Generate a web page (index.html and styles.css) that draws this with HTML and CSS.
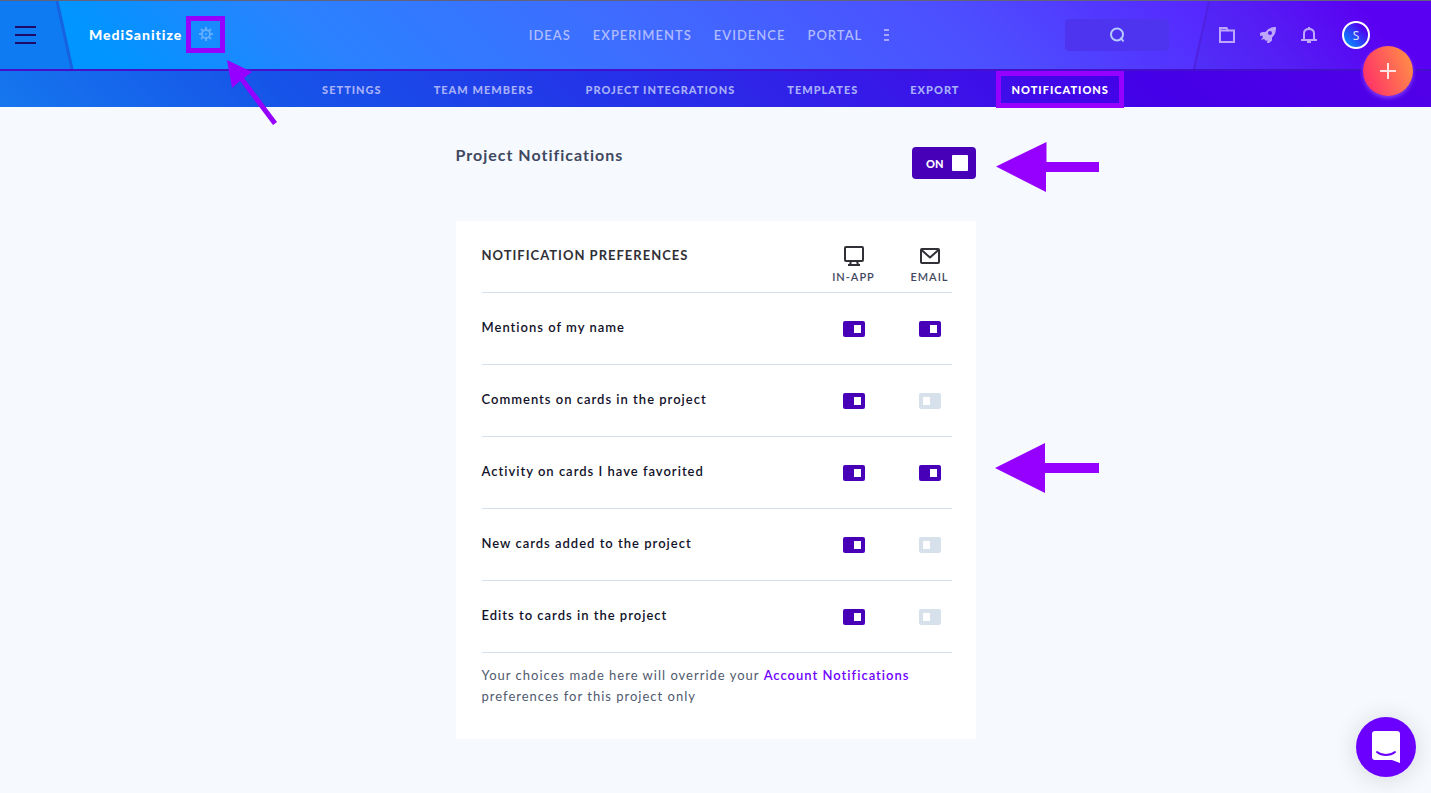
FILE: index.html
```html
<!DOCTYPE html>
<html lang="en">
<head>
<meta charset="utf-8">
<meta name="viewport" content="width=device-width, initial-scale=1">
<title>Project Notifications</title>
<link rel="stylesheet" href="styles.css">
</head>
<body>
<header class="header">
  <div class="topbar">
    <svg class="wedge wedge-left" width="76" height="68" viewBox="0 0 76 68" aria-hidden="true"><path fill="#0f7bf2" d="M0 0h56l15 68H0z"/><path stroke="#1762e0" stroke-width="3" d="M57 0l15 68"/></svg>
    <svg class="wedge wedge-right" width="240" height="68" viewBox="0 0 240 68" aria-hidden="true"><defs><linearGradient id="wedge" gradientUnits="userSpaceOnUse" x1="0" y1="68" x2="135" y2="-40"><stop offset="0" stop-color="#5030f8"/><stop offset=".5" stop-color="#551cf4"/><stop offset="1" stop-color="#5a00f2"/></linearGradient></defs><path fill="url(#wedge)" d="M18 0h222v68H3z"/><path stroke="#5021e0" stroke-width="2" d="M18 0L3 68"/></svg>

    <div class="brand">
      <button class="icon-button" aria-label="Menu"><svg width="21" height="18" viewBox="0 0 21 18"><path fill="#1c0a66" d="M0 0h21v2H0zM0 8h21v2H0zM0 16h21v2H0z"/></svg></button>
      <div class="project">
        <a class="project-name" href="#">MediSanitize</a>
        <button class="gear" aria-label="Project settings"><svg width="14" height="14" viewBox="0 0 14 14" fill="none" stroke="#62adff"><circle cx="7" cy="7" r="4" stroke-width="2"/><circle cx="7" cy="7" r="1" fill="#62adff" stroke="none"/><path stroke-width="2" d="M7 0v3M7 11v3M0 7h3M11 7h3M2 2l2 2M10 10l2 2M12 2l-2 2M4 10l-2 2"/></svg></button>
      </div>
    </div>

    <nav class="main-nav" aria-label="Main">
      <a href="#">IDEAS</a>
      <a href="#">EXPERIMENTS</a>
      <a href="#">EVIDENCE</a>
      <a href="#">PORTAL</a>
      <button class="icon-button" aria-label="More"><svg width="5" height="12" viewBox="0 0 5 12"><path fill="#a9a6ff" d="M0 0h5v2H0zM0 5h5v2H0zM0 10h5v2H0z"/></svg></button>
    </nav>

    <div class="tools">
      <label class="search">
        <input type="search" aria-label="Search">
        <svg width="16" height="16" viewBox="0 0 16 16" fill="none" stroke="#b5c8ff" stroke-width="2"><circle cx="8" cy="7.500" r="6"/><path d="M11.500 10.500l3 4"/></svg>
      </label>
      <button class="icon-button" aria-label="Files"><svg width="16" height="16" viewBox="0 0 16 16" fill="none" stroke="#bda6fc" stroke-width="2"><path d="M1 1h6.500l1.500 2.500h6V15H1z"/><path d="M1 3.500h8"/></svg></button>
      <button class="icon-button" aria-label="Launch"><svg width="16" height="16" viewBox="0 0 16 16"><path fill="#bda6fc" fill-rule="evenodd" d="M16 0C11 0 8 1.500 5.500 5H2.500L0 6v3l2-.5 1 1.500-2 3 3-1 2 2 1.500-1L7 16h2l3-2.500v-3C15 8 16 5 16 0zM10 4a2 2 0 1 1 0 4 2 2 0 0 1 0-4z"/></svg></button>
      <button class="icon-button" aria-label="Alerts"><svg width="16" height="16" viewBox="0 0 16 16" fill="none" stroke="#bda6fc" stroke-width="2"><path d="M0 13h16M3 13V6.500C3 3.500 5 2 8 2s5 1.500 5 4.500V13"/><path d="M8 0v2M6 15h4"/></svg></button>
      <button class="avatar" aria-label="Account">S</button>
    </div>
  </div>

  <nav class="sub-nav" aria-label="Project">
    <a href="#">SETTINGS</a>
    <a href="#">TEAM MEMBERS</a>
    <a href="#">PROJECT INTEGRATIONS</a>
    <a href="#">TEMPLATES</a>
    <a href="#">EXPORT</a>
    <a class="active" href="#" aria-current="page">NOTIFICATIONS</a>
  </nav>

  <button class="add" aria-label="Add"><svg width="16" height="16" viewBox="0 0 16 16"><path stroke="#ffe3e3" stroke-width="2" d="M8 0v16M0 8h16"/></svg></button>
  <svg class="pointer pointer-gear" width="54" height="68" viewBox="0 0 54 68" aria-hidden="true"><path fill="#9500ff" d="M1 1l25 12-8 6 33 44-4 3-33-44-8 7z"/></svg>
</header>

<main class="content">
  <div class="heading">
    <h1>Project Notifications</h1>
    <label class="master"><span>ON</span><input type="checkbox" checked aria-label="Project notifications"></label>
  </div>

  <section class="card">
    <table class="preferences">
      <thead>
        <tr>
          <th class="title" scope="col">NOTIFICATION PREFERENCES</th>
          <th class="in-app" scope="col"><span class="channel"><svg width="20" height="20" viewBox="0 0 20 20" fill="none" stroke="#303036" stroke-width="2" stroke-linejoin="round"><rect x="1" y="1" width="18" height="14" rx="1"/><path d="M7 15l-1 4M13 15l1 4M4 19h12"/></svg>IN-APP</span></th>
          <th class="email" scope="col"><span class="channel"><svg width="20" height="20" viewBox="0 0 20 20" fill="none" stroke="#303036" stroke-width="2" stroke-linejoin="round"><rect x="1" y="3" width="18" height="14" rx="1"/><path d="M1 3.500l9 8 9-8"/></svg>EMAIL</span></th>
        </tr>
      </thead>
      <tbody>
        <tr><th scope="row">Mentions of my name</th><td><input class="switch" type="checkbox" checked aria-label="Mentions, in-app"></td><td><input class="switch" type="checkbox" checked aria-label="Mentions, email"></td></tr>
        <tr><th scope="row">Comments on cards in the project</th><td><input class="switch" type="checkbox" checked aria-label="Comments, in-app"></td><td><input class="switch" type="checkbox" aria-label="Comments, email"></td></tr>
        <tr><th scope="row">Activity on cards I have favorited</th><td><input class="switch" type="checkbox" checked aria-label="Activity, in-app"></td><td><input class="switch" type="checkbox" checked aria-label="Activity, email"></td></tr>
        <tr><th scope="row">New cards added to the project</th><td><input class="switch" type="checkbox" checked aria-label="New cards, in-app"></td><td><input class="switch" type="checkbox" aria-label="New cards, email"></td></tr>
        <tr><th scope="row">Edits to cards in the project</th><td><input class="switch" type="checkbox" checked aria-label="Edits, in-app"></td><td><input class="switch" type="checkbox" aria-label="Edits, email"></td></tr>
      </tbody>
    </table>
    <p class="note">Your choices made here will override your <a href="#">Account Notifications</a> preferences for this project only</p>
  </section>

  <svg class="pointer pointer-master" width="104" height="50" viewBox="0 0 104 50" aria-hidden="true"><path fill="#9500ff" d="M0 24.500L50.500 0v20H103v10H50v20z"/></svg>
  <svg class="pointer pointer-table" width="104" height="50" viewBox="0 0 104 50" aria-hidden="true"><path fill="#9500ff" d="M0 25L50 0v20h54v10H50v20z"/></svg>
</main>

<button class="chat" aria-label="Open chat"><svg width="28" height="32" viewBox="0 0 28 32"><path fill="#fff" d="M3 0h22a3 3 0 0 1 3 3v29l-8-3H3a3 3 0 0 1-3-3V3a3 3 0 0 1 3-3z"/><path fill="none" stroke="#6b00ff" stroke-width="2" stroke-linecap="round" d="M5 21c5 4 13 4 18 0"/></svg></button>
</body>
</html>
```

FILE: styles.css
```css
* {
  box-sizing: border-box;
}

body {
  margin: 0;
  min-height: 100vh;
  background: #f6faff;
  color: #12122b;
  font-family: Lato, "Open Sans", sans-serif;
  letter-spacing: 1px;
}

a {
  color: inherit;
  text-decoration: none;
}

button {
  display: flex;
  align-items: center;
  justify-content: center;
  padding: 0;
  border: 0;
  background: none;
  font: inherit;
  cursor: pointer;
}

svg {
  display: block;
  flex: none;
}

.header {
  position: relative;
  border-top: 1px solid #62627a;
}

.topbar {
  position: relative;
  display: grid;
  grid-template-columns: 1fr auto 1fr;
  align-items: center;
  height: 70px;
  padding: 0 28px 0 15px;
  border-bottom: 2px solid #4510cc;
  background: linear-gradient(45deg, #0095ff 8%, #2a82ff 23%, #3f6bff 45%, #4d4dff 68%, #5628ff 84%, #5a00f0 100%);
}

.wedge {
  position: absolute;
  top: 0;
}

.wedge-left {
  left: 0;
}

.wedge-right {
  right: 0;
}

.brand,
.tools {
  position: relative;
  display: flex;
  align-items: center;
}

.brand {
  gap: 53px;
}

.project {
  display: flex;
  align-items: center;
  gap: 4px;
  padding-bottom: 2px;
}

.project-name {
  color: #fff;
  font-size: 14px;
  font-weight: 900;
}

.gear {
  width: 39px;
  height: 37px;
  border: 5px solid #9500ff;
}

.main-nav {
  position: relative;
  display: flex;
  align-items: center;
  gap: 22px;
  color: #b0bcff;
  font-size: 13px;
  font-weight: 600;
}

.tools {
  justify-content: flex-end;
  gap: 25px;
  padding-right: 33px;
}

.search {
  position: relative;
  display: flex;
  align-items: center;
  justify-content: center;
  margin-right: 25px;
}

.search input {
  width: 104px;
  height: 32px;
  border: 0;
  border-radius: 4px;
  background: #4e33ef;
  color: #fff;
}

.search svg {
  position: absolute;
}

.avatar {
  width: 28px;
  height: 28px;
  border: 2px solid #fff;
  border-radius: 50%;
  background: linear-gradient(45deg, #0a84ff 15%, #5000f0 80%);
  color: #d8e4ff;
  font-family: "Noto Sans", sans-serif;
  font-size: 12px;
  letter-spacing: 0;
}

.sub-nav {
  display: flex;
  justify-content: center;
  gap: 52px;
  padding-top: 2px;
  background: linear-gradient(45deg, #1577ee 0%, #1654e8 20%, #2433e8 43%, #3c12e8 66%, #4400e8 80%, #5200e8 100%);
  color: #a7b0f9;
  font-size: 11px;
  font-weight: 900;
  line-height: 34px;
}

.sub-nav .active {
  position: relative;
  color: #fff;
}

.sub-nav .active::after {
  content: "";
  position: absolute;
  inset: -2px -15px -1px -16px;
  border: 5px solid #9500ff;
}

.add {
  position: absolute;
  top: 45px;
  right: 18px;
  width: 50px;
  height: 50px;
  border-radius: 50%;
  background: linear-gradient(70deg, #ff3866 15%, #ff8b48 90%);
  box-shadow: 0 2px 4px rgba(190, 130, 255, 0.5);
}

.pointer {
  position: absolute;
  z-index: 1;
  pointer-events: none;
}

.pointer-gear {
  top: 58px;
  left: 226px;
}

.content {
  position: relative;
  width: 100%;
  max-width: 520px;
  margin: 0 auto;
  padding: 40px 0 54px;
}

.heading {
  display: flex;
  align-items: flex-start;
  justify-content: space-between;
  margin-bottom: 42px;
}

h1 {
  margin: 0;
  color: #3f4860;
  font-size: 16px;
  font-weight: 700;
  line-height: 16px;
}

.master {
  display: flex;
  align-items: center;
  justify-content: flex-end;
  gap: 8px;
  width: 64px;
  height: 32px;
  padding-right: 8px;
  border-radius: 4px;
  background: #4700b8;
  color: #fff;
  font-size: 11px;
  font-weight: 900;
  letter-spacing: 0;
}

.master input {
  width: 16px;
  height: 16px;
  margin: 0;
  border-radius: 1px;
  background: #fff;
  appearance: none;
}

.card {
  padding: 0 24px 32px 26px;
  background: #fff;
}

.preferences {
  width: 100%;
  border-collapse: collapse;
  font-size: 13px;
}

.preferences tr {
  height: 72px;
  border-bottom: 1px solid #d7e1ec;
}

.preferences thead tr {
  height: 71px;
}

.preferences th,
.preferences td {
  padding: 2px 0 0;
  text-align: left;
}

.preferences th {
  padding: 0 0 2px;
  font-weight: 600;
}

.preferences .title {
  color: #303036;
  font-weight: 700;
}

.in-app {
  width: 108px;
}

.email {
  width: 44px;
}

.channel {
  display: flex;
  flex-direction: column;
  align-items: center;
  gap: 4px;
  padding-top: 20px;
  color: #3f4860;
  font-size: 11px;
  line-height: 14px;
}

.switch {
  display: block;
  width: 22px;
  height: 16px;
  margin: 0 auto;
  padding: 4px;
  border-radius: 2px;
  background: #d7e1ec;
  appearance: none;
}

.switch::before {
  content: "";
  display: block;
  width: 7px;
  height: 8px;
  background: #fff;
}

.switch:checked {
  background: #4700b8;
}

.switch:checked::before {
  margin-left: auto;
}

.note {
  margin: 0;
  padding-top: 12px;
  color: #505a6e;
  font-size: 13px;
  line-height: 21px;
}

.note a {
  color: #7000ff;
  font-weight: 600;
}

.pointer-master {
  top: 35px;
  left: 540px;
}

.pointer-table {
  top: 336px;
  left: 539px;
}

.chat {
  position: fixed;
  right: 15px;
  bottom: 16px;
  width: 60px;
  height: 60px;
  border-radius: 50%;
  background: #6b00ff;
  box-shadow: 0 2px 24px rgba(0, 0, 0, 0.14);
}
```
